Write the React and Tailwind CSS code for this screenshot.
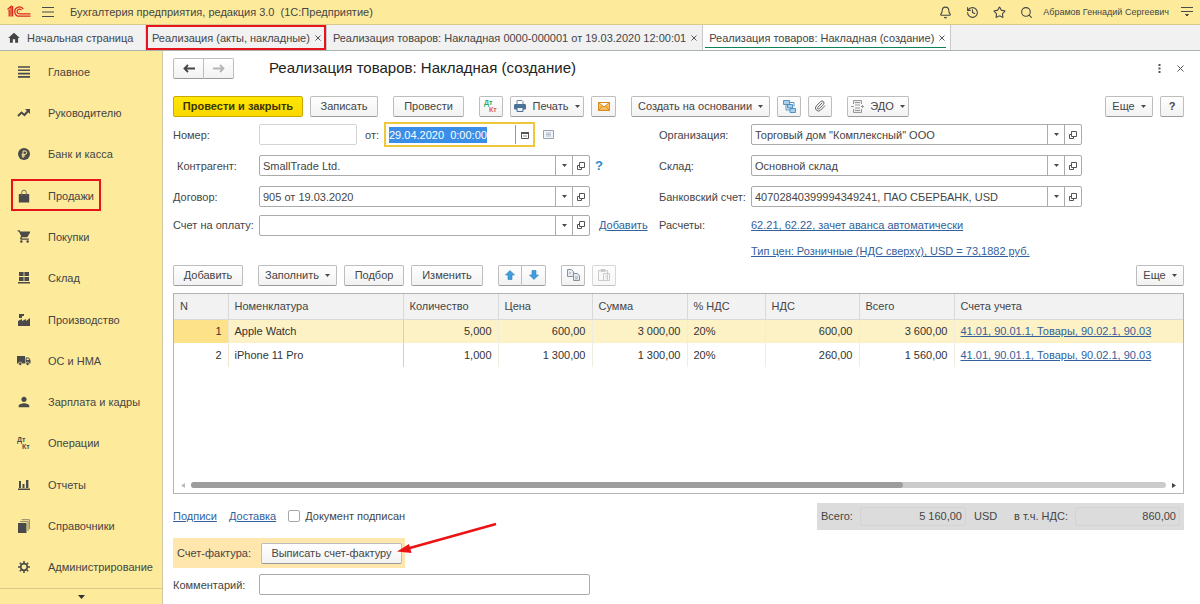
import { useEffect, useRef } from "react";
import { Bell, History, Star, Search, Paperclip } from "lucide-react";
import { MdShoppingCart, MdPerson, MdHome } from "react-icons/md";

const DtKt = ({ top = "#4a4a4a", bottom = "#4a4a4a", size = 14 }) => (
  <svg width={size} height={size} viewBox="0 0 14 14" fontFamily="Liberation Sans, sans-serif" fontWeight="bold" fontSize="7">
    <text x="0" y="6" fill={top}>Дт</text>
    <text x="5" y="13" fill={bottom}>Кт</text>
  </svg>
);

const Logo = () => (
  <svg width="24" height="14" viewBox="0 0 24 14" fill="none" stroke="#d9291c" strokeWidth="1.3">
    <path d="M0.5 4.5 L4 1.5 V11.5 M1.5 6 L2.2 5.5 V11.5 M5.6 1 V11.5" />
    <path d="M16.3 4.2 A4.6 4.6 0 1 0 12.5 11.2 H23.5" />
    <path d="M14.4 5 A2.4 2.4 0 1 0 12.5 8.9 H23.5" />
    <path d="M12.5 6.6 h.4" />
  </svg>
);

const ListIcon = () => (
  <svg width="12" height="12" viewBox="0 0 12 12" stroke="#4a4a4a" strokeWidth="1.6">
    <path d="M0 1h12M0 4.3h12M0 7.6h12M0 10.9h12" />
  </svg>
);

const TrendIcon = () => (
  <svg width="14" height="10" viewBox="0 0 14 10" fill="none">
    <path d="M1 8l3.5-3.5L7.5 7 11 3" stroke="#4a4a4a" strokeWidth="2" />
    <path d="M8 1h5v5z" fill="#4a4a4a" />
  </svg>
);

const RubleIcon = () => (
  <svg width="12" height="12" viewBox="0 0 12 12" fill="none">
    <circle cx="6" cy="6" r="6" fill="#4a4a4a" />
    <path d="M5 10V3h2a1.6 1.6 0 0 1 0 3.4H3.6M3.6 8h3.6" stroke="#fdeb9b" />
  </svg>
);

const BagIcon = () => (
  <svg width="12" height="14" viewBox="0 0 12 14" fill="none">
    <path d="M.8 5h10.400v8.500H.8z" fill="#4a4a4a" />
    <path d="M3.7 7V3.5a2.3 2.3 0 0 1 4.6 0V7" stroke="#6b6855" />
  </svg>
);

const StoreIcon = () => (
  <svg width="12" height="12" viewBox="0 0 12 12" fill="#4a4a4a">
    <path d="M1 0h4.6v4H1zM6.4 0H11v4H6.4zM1 5h4.6v4H1zM6.4 5H11v4H6.4zM0 10h12v1.6H0z" />
  </svg>
);

const FactoryIcon = () => (
  <svg width="12" height="12" viewBox="0 0 12 12" fill="#4a4a4a">
    <path d="M0 12V7l4-2v2l4-2v2l4-3v8zM1 0h5v2H4v2H1z" />
  </svg>
);

const TruckIcon = () => (
  <svg width="14" height="10" viewBox="0 0 14 10" fill="#4a4a4a">
    <path d="M0 0h8v7.500H0zM8.600 1.500h3.200L13.500 4v3.500H8.600z" />
    <path d="M9.600 2.500h1.800l1 1.600H9.600z" fill="#fdeb9b" />
    <circle cx="3.200" cy="7.800" r="1.700" stroke="#fdeb9b" strokeWidth=".7" />
    <circle cx="10.600" cy="7.800" r="1.700" stroke="#fdeb9b" strokeWidth=".7" />
  </svg>
);

const ChartIcon = () => (
  <svg width="12" height="10" viewBox="0 0 12 10" fill="#4a4a4a">
    <path d="M1 1h2v7H1zM4.5 4h2v4h-2zM8 0h2.4v8H8zM0 8.5h12V10H0z" />
  </svg>
);

const BooksIcon = () => (
  <svg width="12" height="14" viewBox="0 0 12 14" fill="#4a4a4a">
    <path d="M0 4h8.5v10H0z" />
    <path d="M2 2.6h8V12M3.6 .7h7.8V10" fill="none" stroke="#8d8766" />
  </svg>
);

const GearIcon = () => (
  <svg width="12" height="12" viewBox="0 0 12 12" fill="none" stroke="#4a4a4a">
    <circle cx="6" cy="6" r="3.300" strokeWidth="1.700" />
    <path d="M6 0v2.200M6 9.800V12M0 6h2.200M9.800 6H12M1.800 1.800l1.500 1.500M8.700 8.700l1.500 1.500M1.800 10.200l1.500-1.500M8.700 3.300l1.500-1.500" strokeWidth="1.600" />
  </svg>
);

const OpenIcon = () => (
  <svg width="8" height="8" viewBox="0 0 8 8" fill="none" stroke="#555">
    <path d="M2.5.5h5v5h-5zM2.5 3.5h-2v4h4v-2" />
  </svg>
);

const Caret = () => (
  <svg width="5" height="3" viewBox="0 0 5 3" fill="#4a4a4a">
    <path d="M0 0h5L2.500 3z" />
  </svg>
);

const Arrow = ({ color, left }) => (
  <svg width="12" height="9" viewBox="0 0 12 9" fill="none" stroke={color} strokeWidth="1.8">
    {left ? <path d="M12 4.500H1.500M5 1L1.500 4.500L5 8" /> : <path d="M0 4.500h10.500M7 1l3.500 3.500L7 8" />}
  </svg>
);

const BlueArrow = ({ down }) => (
  <svg width="10" height="10" viewBox="0 0 10 10" fill="#3f9fdc" stroke="#2b7fb9" strokeWidth=".6">
    {down ? <path d="M3 .5h4V5h2.500L5 9.500.5 5H3z" /> : <path d="M3 9.500h4V5h2.500L5 .5.5 5H3z" />}
  </svg>
);

const PrinterIcon = () => (
  <svg width="12" height="12" viewBox="0 0 12 12">
    <path d="M3 .5h5l1 1V5H3z" fill="#fff" stroke="#6c87a5" />
    <rect y="4" width="12" height="5.500" rx="1.200" fill="#4b7199" />
    <path d="M3 7.500h6v4H3z" fill="#e8eef5" stroke="#4b7199" />
  </svg>
);

const MailIcon = () => (
  <svg width="12" height="9" viewBox="0 0 12 9" fill="#fbbf5d" stroke="#d98a1f">
    <path d="M.5.5h11v8H.5zM.5.5L6 5l5.500-4.500M.5 8.500L4.500 4M11.500 8.500L7.500 4" />
  </svg>
);

const StructureIcon = () => (
  <svg width="13" height="13" viewBox="0 0 13 13" fill="#a8d0ee" stroke="#4a8abb" strokeWidth=".9">
    <path d="M3 5v5h4M7 2.500h4v4" fill="none" />
    <path d="M.5.5h6v4h-6zM4.500 4.500h5v3.500h-5zM7 8.500h5.500v4H7z" />
  </svg>
);

const EdoIcon = () => (
  <svg width="13" height="13" viewBox="0 0 13 13" fill="#ececec" stroke="#999">
    <path d="M2.500 4V.5h8V4M2.500 9v3.500h8V9" />
    <path d="M0 6.500h3M10 6.500h3M4 5h5M4 8h5M4 2.500h5M4 10.500h5M11.500 5v3" />
  </svg>
);

const CopyIcon = () => (
  <svg width="13" height="12" viewBox="0 0 13 12" fill="#e4e9ef" stroke="#8793a1">
    <path d="M.5.5h4l2 2v5h-6zM6.500 4.500h3.500l2.500 2v5h-6z" />
    <path d="M8 8h3M8 9.800h3M2 4h2" strokeWidth=".7" />
  </svg>
);

const PasteIcon = () => (
  <svg width="12" height="12" viewBox="0 0 12 12" fill="#f5f5f5" stroke="#aaa">
    <path d="M.5 1.500h9v10h-9zM3 .5h4v2H3zM5.500 4.500h6v7h-6z" />
    <path d="M7 7h3M7 9h3" strokeWidth=".7" />
  </svg>
);

const menu = [
  { label: "Главное", icon: <ListIcon /> },
  { label: "Руководителю", icon: <TrendIcon /> },
  { label: "Банк и касса", icon: <RubleIcon /> },
  { label: "Продажи", icon: <BagIcon />, marked: true },
  { label: "Покупки", icon: <MdShoppingCart size={15} /> },
  { label: "Склад", icon: <StoreIcon /> },
  { label: "Производство", icon: <FactoryIcon /> },
  { label: "ОС и НМА", icon: <TruckIcon /> },
  { label: "Зарплата и кадры", icon: <MdPerson size={16} /> },
  { label: "Операции", icon: <DtKt /> },
  { label: "Отчеты", icon: <ChartIcon /> },
  { label: "Справочники", icon: <BooksIcon /> },
  { label: "Администрирование", icon: <GearIcon /> },
];

const rows = [
  { n: 1, name: "Apple Watch", qty: "5,000", price: "600,00", sum: "3 000,00", vat: "600,00", total: "3 600,00" },
  { n: 2, name: "iPhone 11 Pro", qty: "1,000", price: "1 300,00", sum: "1 300,00", vat: "260,00", total: "1 560,00" },
];

function Btn({ children, className = "px-3", ...rest }) {
  return (
    <button
      className={`flex h-[21px] shrink-0 items-center justify-center gap-1.5 rounded-xs border border-[#bdbdbd] border-b-[#9b9b9b] bg-linear-to-b from-white to-[#f2f2f2] whitespace-nowrap ${className}`}
      {...rest}
    >
      {children}
    </button>
  );
}

function Combo({ id, value }) {
  return (
    <div className="flex h-[21px] w-[331px] shrink-0 rounded-xs border border-[#ababab] bg-white">
      <input id={id} defaultValue={value} className="min-w-0 flex-1 px-[3px] outline-none" />
      <button aria-label="Выбрать" className="flex w-[17px] items-center justify-center border-l border-[#ababab]"><Caret /></button>
      <button aria-label="Открыть" className="flex w-[17px] items-center justify-center border-l border-[#ababab]"><OpenIcon /></button>
    </div>
  );
}

function Link({ children }) {
  return <a href="#" className="whitespace-nowrap text-[#33619c] underline">{children}</a>;
}

function Tab({ children, active, marked }) {
  return (
    <div className={`relative flex items-center gap-1 border-r border-[#c8c8c8] pr-1 pl-1.5 whitespace-nowrap ${active ? "bg-white" : ""}`}>
      <a href="#">{children}</a>
      <button aria-label="Закрыть вкладку" className="flex w-2 justify-center">
        <svg width="6" height="6" viewBox="0 0 6 6" stroke="#555"><path d="M.5.5l5 5M5.500.5l-5 5" /></svg>
      </button>
      {active && <span className="absolute right-1 bottom-0.5 left-0.5 h-px bg-[#0b8257]" />}
      {marked && <span className="pointer-events-none absolute inset-0 border-2 border-[#e8141c]" />}
    </div>
  );
}

export default function App() {
  const dateRef = useRef(null);

  useEffect(() => {
    dateRef.current.focus();
    dateRef.current.select();
  }, []);

  return (
    <div className="flex min-h-screen flex-col bg-white font-['Liberation_Sans',Arial,sans-serif] text-[11px] leading-4 text-[#454545]">
      <header className="flex h-[25px] items-center border-b border-[#d8cb8a] bg-[#fdeb9b] pr-[7px] pl-[7px]">
        <Logo />
        <button aria-label="Меню" className="mr-4 ml-[11px]">
          <svg width="12" height="10" viewBox="0 0 12 10" stroke="#4a4a4a"><path d="M0 .5h12M0 5h12M0 9.500h12" /></svg>
        </button>
        <span className="whitespace-pre">Бухгалтерия предприятия, редакция 3.0  (1С:Предприятие)</span>
        <div className="ml-auto flex items-center gap-[14px]">
          <button aria-label="Уведомления"><Bell size={13} strokeWidth={2} /></button>
          <button aria-label="История"><History size={13} strokeWidth={2} /></button>
          <button aria-label="Избранное"><Star size={13} strokeWidth={2} /></button>
          <button aria-label="Поиск"><Search size={13} strokeWidth={2} /></button>
        </div>
        <span className="mr-3 ml-[10px] text-[9px]">Абрамов Геннадий Сергеевич</span>
        <button aria-label="Настройки">
          <svg width="12" height="10" viewBox="0 0 12 10" stroke="#4a4a4a"><path d="M0 .5h12M0 4.500h12" /><path d="M4.500 7.500h3L6 9z" fill="#4a4a4a" /></svg>
        </button>
      </header>

      <nav className="flex h-[26px] border-b border-[#a9b3ae] bg-[#f1f1f2]">
        <div className="flex w-[146px] items-center gap-1.5 border-r border-[#d8d8d8] pl-[7px] whitespace-nowrap">
          <MdHome size={14} />
          <a href="#">Начальная страница</a>
        </div>
        <Tab marked>Реализация (акты, накладные)</Tab>
        <Tab>Реализация товаров: Накладная 0000-000001 от 19.03.2020 12:00:01</Tab>
        <Tab active>Реализация товаров: Накладная (создание)</Tab>
      </nav>

      <div className="flex flex-1">
        <aside className="flex w-[163px] shrink-0 flex-col border-r border-[#cfc9a8] bg-[#fdeb9b]">
          <ul className="flex flex-1 flex-col">
            {menu.map((item) => (
              <li key={item.label} className="relative flex flex-1 items-center">
                <a href="#" className="flex items-center">
                  <span className="ml-4 flex w-4 justify-center text-[#4a4a4a]">{item.icon}</span>
                  <span className="ml-4">{item.label}</span>
                </a>
                {item.marked && <span className="pointer-events-none absolute top-1 left-[11px] h-8 w-[90px] border-2 border-[#e8141c]" />}
              </li>
            ))}
          </ul>
          <button aria-label="Еще разделы" className="flex h-4 items-center justify-center border-t border-[#d8cb8a]">
            <svg width="7" height="4" viewBox="0 0 7 4"><path d="M0 0h7L3.500 4z" fill="#333" /></svg>
          </button>
        </aside>

        <main className="flex min-w-0 flex-1 flex-col pr-4 pl-[10px]">
          <div className="mt-1.5 flex h-[22px] items-center">
            <div className="flex">
              <Btn aria-label="Назад" className="w-[31px] rounded-r-none"><Arrow color="#444" left /></Btn>
              <Btn aria-label="Вперед" className="w-[30px] rounded-l-none border-l-0"><Arrow color="#b5b5b5" /></Btn>
            </div>
            <h1 className="ml-[35px] text-[15px] leading-5 text-[#222]">Реализация товаров: Накладная (создание)</h1>
            <button aria-label="Действия" className="mr-4 ml-auto">
              <svg width="3" height="9" viewBox="0 0 3 9" fill="#555"><path d="M.5 0h2v2h-2zM.5 3.500h2v2h-2zM.5 7h2v2h-2z" /></svg>
            </button>
            <button aria-label="Закрыть">
              <svg width="7" height="7" viewBox="0 0 7 7" stroke="#555"><path d="M.5.5l6 6M6.500.5l-6 6" /></svg>
            </button>
          </div>

          <div className="mt-4 flex h-[22px] items-center gap-[7px]">
            <Btn className="w-[130px] !border-[#c9a800] !from-[#ffe600] !to-[#fbd800] font-bold text-[#3a3500]">Провести и закрыть</Btn>
            <Btn className="mr-2 w-[68px]">Записать</Btn>
            <Btn className="mr-2 w-[71px]">Провести</Btn>
            <Btn aria-label="Дт Кт" className="w-6"><DtKt top="#2aa866" bottom="#dd5a5a" /></Btn>
            <Btn className="w-[74px]"><PrinterIcon />Печать<Caret /></Btn>
            <Btn aria-label="Отправить" className="mr-2 w-[25px]"><MailIcon /></Btn>
            <Btn className="w-[139px]">Создать на основании<Caret /></Btn>
            <Btn aria-label="Структура подчиненности" className="w-6"><StructureIcon /></Btn>
            <Btn aria-label="Файлы" className="mr-2 w-6"><Paperclip size={12} className="text-[#666]" /></Btn>
            <Btn className="w-[62px]"><EdoIcon />ЭДО<Caret /></Btn>
            <Btn className="ml-auto w-12">Еще<Caret /></Btn>
            <Btn className="w-6 font-bold">?</Btn>
          </div>

          <div className="mt-0.5 flex">
            <div className="w-[486px] shrink-0">
              <div className="flex h-[31px] items-center">
                <label htmlFor="number" className="w-[86px]">Номер:</label>
                <input id="number" className="h-[21px] w-[98px] rounded-xs border border-[#d4d4d4] px-1" />
                <label htmlFor="date" className="mx-2 w-[11px]">от:</label>
                <div className="flex h-[25px] w-[151px] items-center border-2 border-[#eec73a]">
                  <input id="date" ref={dateRef} defaultValue="29.04.2020  0:00:00" className="min-w-0 flex-1 pl-[3px] whitespace-pre outline-none selection:bg-[#3a8ee8] selection:text-white" />
                  <button aria-label="Календарь" className="flex h-[19px] w-[18px] items-center justify-center border-l border-[#999]">
                    <svg width="8" height="8" viewBox="0 0 8 8" fill="none" stroke="#555"><path d="M.5 1.500h7v6h-7z" /><path d="M0 2h8" strokeWidth="2" /><path d="M2 5h4" strokeWidth=".7" /></svg>
                  </button>
                </div>
                <svg width="11" height="9" viewBox="0 0 11 9" className="ml-2" fill="#f0f5f9" stroke="#94a3b3"><path d="M.5.5h10v8H.5z" /><path d="M3 3h5M3 4.500h5M3 6h5" strokeWidth=".7" /></svg>
              </div>
              <div className="flex h-[31px] items-center">
                <label htmlFor="partner" className="w-[86px] pl-1">Контрагент:</label>
                <Combo id="partner" value="SmallTrade Ltd." />
                <button aria-label="Справка" className="ml-[5px] text-[13px] font-bold text-[#2b8ccd]">?</button>
              </div>
              <div className="flex h-[31px] items-center">
                <label htmlFor="contract" className="w-[86px]">Договор:</label>
                <Combo id="contract" value="905 от 19.03.2020" />
              </div>
              <div className="flex h-[26px] items-center">
                <label htmlFor="invoice" className="w-[86px] whitespace-nowrap">Счет на оплату:</label>
                <Combo id="invoice" value="" />
                <span className="ml-[9px]"><Link>Добавить</Link></span>
              </div>
            </div>
            <div>
              <div className="flex h-[31px] items-center">
                <label htmlFor="org" className="w-[92px]">Организация:</label>
                <Combo id="org" value={'Торговый дом "Комплексный" ООО'} />
              </div>
              <div className="flex h-[31px] items-center">
                <label htmlFor="store" className="w-[92px]">Склад:</label>
                <Combo id="store" value="Основной склад" />
              </div>
              <div className="flex h-[31px] items-center">
                <label htmlFor="bank" className="w-[92px] whitespace-nowrap">Банковский счет:</label>
                <Combo id="bank" value="40702840399994349241, ПАО СБЕРБАНК, USD" />
              </div>
              <div className="flex h-[26px] items-center">
                <span className="w-[92px]">Расчеты:</span>
                <Link>62.21, 62.22, зачет аванса автоматически</Link>
              </div>
              <div className="flex h-[26px] items-center pl-[92px]">
                <Link>Тип цен: Розничные (НДС сверху), USD = 73,1882 руб.</Link>
              </div>
            </div>
          </div>

          <div className="flex h-[22px] items-center gap-[7px]">
            <Btn className="mr-2 w-[70px]">Добавить</Btn>
            <Btn className="w-[79px]">Заполнить<Caret /></Btn>
            <Btn className="w-[60px]">Подбор</Btn>
            <Btn className="mr-2 w-[72px]">Изменить</Btn>
            <div className="mr-2 flex">
              <Btn aria-label="Вверх" className="w-6 rounded-r-none"><BlueArrow /></Btn>
              <Btn aria-label="Вниз" className="w-6 rounded-l-none border-l-0"><BlueArrow down /></Btn>
            </div>
            <Btn aria-label="Копировать" className="w-6"><CopyIcon /></Btn>
            <Btn aria-label="Вставить" className="w-6 opacity-60"><PasteIcon /></Btn>
            <Btn className="ml-auto w-12">Еще<Caret /></Btn>
          </div>

          <div className="mt-[7px] flex h-[201px] flex-col border border-[#b3b3b3]">
            <table className="w-full table-fixed border-collapse whitespace-nowrap">
              <colgroup>
                <col className="w-[54px]" />
                <col className="w-[175px]" />
                <col className="w-[95px]" />
                <col className="w-[94px]" />
                <col className="w-[95px]" />
                <col className="w-[78px]" />
                <col className="w-[94px]" />
                <col className="w-[95px]" />
                <col />
              </colgroup>
              <thead>
                <tr className="h-[25px] bg-[#f2f2f2]">
                  {["N", "Номенклатура", "Количество", "Цена", "Сумма", "% НДС", "НДС", "Всего", "Счета учета"].map((h) => (
                    <th key={h} className="border-r border-b border-[#d9d9d9] px-1.5 text-left font-normal last:border-r-0">{h}</th>
                  ))}
                </tr>
              </thead>
              <tbody>
                {rows.map((r, i) => (
                  <tr key={r.n} className={`h-6 text-right text-[#333] ${i === 0 ? "bg-[#fdf1c6]" : ""}`}>
                    <td className={`border-r border-[#eee6cf] px-1.5 ${i === 0 ? "bg-[#fde28a]" : ""}`}>{r.n}</td>
                    <td className="border-r border-[#d0d0d0] px-1.5 text-left">{r.name}</td>
                    <td className="border-r border-[#f0ece0] px-1.5">{r.qty}</td>
                    <td className="border-r border-[#f0ece0] px-1.5">{r.price}</td>
                    <td className="border-r border-[#f0ece0] px-1.5">{r.sum}</td>
                    <td className="border-r border-[#f0ece0] px-1.5 text-left">20%</td>
                    <td className="border-r border-[#f0ece0] px-1.5">{r.vat}</td>
                    <td className="border-r border-[#f0ece0] px-1.5">{r.total}</td>
                    <td className="px-1.5 text-left"><Link>41.01, 90.01.1, Товары, 90.02.1, 90.03</Link></td>
                  </tr>
                ))}
              </tbody>
            </table>
            <div className="mt-auto mb-[5px] flex items-center gap-1.5 px-[7px]">
              <svg width="4" height="5" viewBox="0 0 4 5" fill="#bbb"><path d="M4 0v5L0 2.500z" /></svg>
              <div className="h-1.5 flex-1 rounded-full bg-[#cbcbcb]">
                <div className="h-1.5 w-[73%] rounded-full bg-[#9d9d9d]" />
              </div>
              <svg width="4" height="5" viewBox="0 0 4 5" fill="#444"><path d="M0 0v5l4-2.500z" /></svg>
            </div>
          </div>

          <div className="mt-2 flex h-[28px] items-center">
            <Link>Подписи</Link>
            <span className="mx-3"><Link>Доставка</Link></span>
            <input id="signed" type="checkbox" className="size-3 appearance-none rounded-xs border border-[#a8a8a8]" />
            <label htmlFor="signed" className="ml-[5px]">Документ подписан</label>
            <div className="ml-auto flex h-[27px] w-[367px] items-center bg-[#dcdcdc] px-1">
              <label htmlFor="total" className="w-[39px]">Всего:</label>
              <input id="total" readOnly defaultValue="5 160,00" className="h-[19px] w-[106px] min-w-0 rounded-xs border border-[#d3d3d3] px-[3px] text-right" />
              <span className="ml-2 w-10">USD</span>
              <label htmlFor="vat" className="w-[61px] whitespace-nowrap">в т.ч. НДС:</label>
              <input id="vat" readOnly defaultValue="860,00" className="h-[19px] min-w-0 flex-1 rounded-xs border border-[#d3d3d3] px-[3px] text-right" />
            </div>
          </div>

          <div className="relative mt-2 flex h-[30px] w-[232px] items-center bg-[#fee6ad] pl-1">
            <span className="w-[84px]">Счет-фактура:</span>
            <Btn className="w-[141px]">Выписать счет-фактуру</Btn>
            <svg width="100" height="32" viewBox="0 0 100 32" className="pointer-events-none absolute -top-4 left-[224px]" fill="#ed1313">
              <path d="M11 26.500L99 2" stroke="#ed1313" strokeWidth="2.500" />
              <path d="M0 29.500L12 22L14.500 31z" />
            </svg>
          </div>

          <div className="mt-1.5 flex h-[21px] items-center">
            <label htmlFor="comment" className="w-[86px]">Комментарий:</label>
            <input id="comment" className="h-[21px] w-[331px] rounded-xs border border-[#ababab] px-1 outline-none" />
          </div>
        </main>
      </div>
    </div>
  );
}
